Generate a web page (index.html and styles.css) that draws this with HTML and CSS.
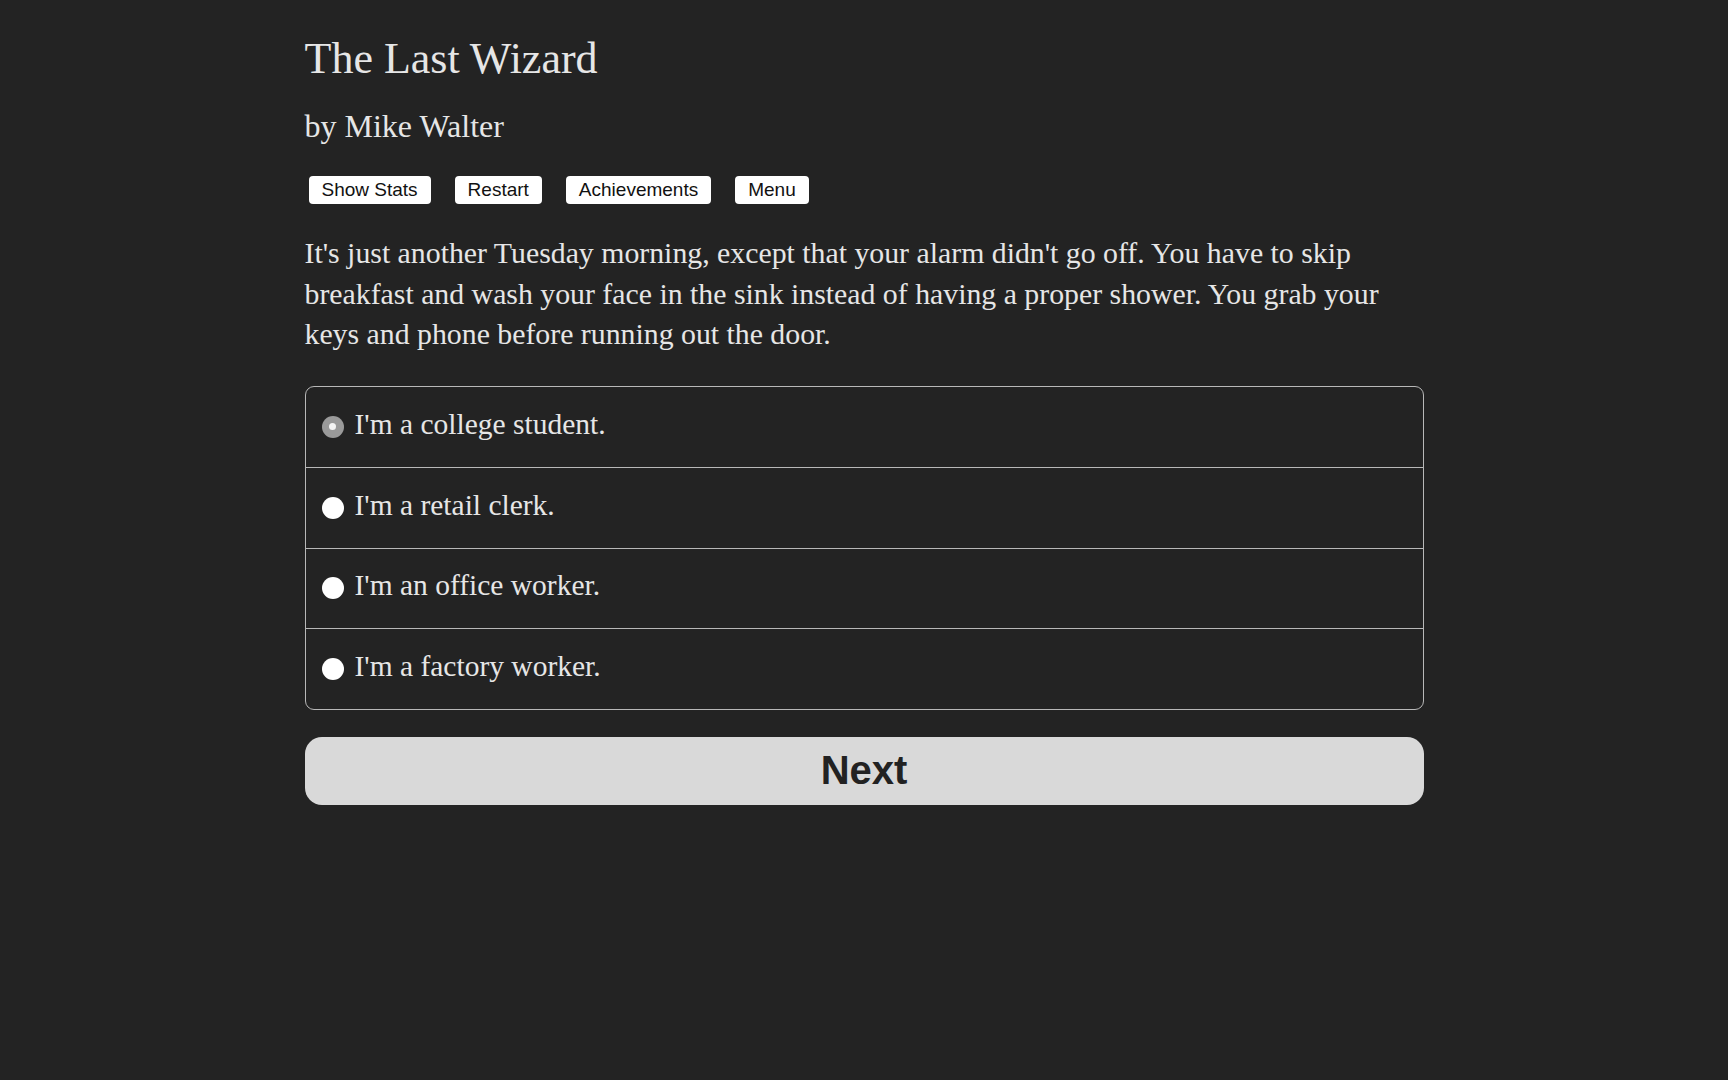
FILE: index.html
```html
<!DOCTYPE html>
<html lang="en">
<head>
<meta charset="utf-8">
<title>The Last Wizard</title>
<link rel="stylesheet" href="styles.css">
</head>
<body>
<main class="page">
  <h1 class="title">The Last Wizard</h1>
  <h2 class="byline">by Mike Walter</h2>
  <div class="toolbar">
    <button class="tool-btn">Show Stats</button>
    <button class="tool-btn">Restart</button>
    <button class="tool-btn">Achievements</button>
    <button class="tool-btn">Menu</button>
  </div>
  <p class="story">It's just another Tuesday morning, except that your alarm didn't go off. You have to skip breakfast and wash your face in the sink instead of having a proper shower. You grab your keys and phone before running out the door.</p>
  <form class="choices">
    <label class="choice"><input class="radio" type="radio" name="job" checked><span class="choice-text">I'm a college student.</span></label>
    <label class="choice"><input class="radio" type="radio" name="job"><span class="choice-text">I'm a retail clerk.</span></label>
    <label class="choice"><input class="radio" type="radio" name="job"><span class="choice-text">I'm an office worker.</span></label>
    <label class="choice"><input class="radio" type="radio" name="job"><span class="choice-text">I'm a factory worker.</span></label>
  </form>
  <button class="next-btn">Next</button>
</main>
</body>
</html>
```
FILE: styles.css
```css
html, body {
  margin: 0;
  padding: 0;
  background: #232323;
}
body {
  color: #e6e6e6;
  font-family: "Liberation Serif", "DejaVu Serif", serif;
}
.page {
  width: 1119px;
  margin: 0 auto;
  padding-top: 33px;
  display: flex;
  flex-direction: column;
}
.title {
  margin: 0;
  font-size: 44px;
  line-height: 52px;
  font-weight: normal;
}
.byline {
  margin: 21px 0 0;
  font-size: 32px;
  line-height: 40px;
  font-weight: normal;
}
.toolbar {
  margin-top: 30px;
  padding-left: 4px;
  display: flex;
  gap: 24px;
}
.tool-btn {
  height: 28px;
  padding: 0 13px;
  border: none;
  border-radius: 4px;
  background: #ffffff;
  color: #111;
  font-family: "Liberation Sans", Arial, sans-serif;
  font-size: 19px;
  line-height: 28px;
}
.story {
  margin: 29px 0 0;
  font-size: 29.8px;
  line-height: 40.5px;
}
.choices {
  margin-top: 31px;
  border: 1px solid #b8b8b8;
  border-radius: 9px;
  display: flex;
  flex-direction: column;
}
.choice {
  height: 80.5px;
  display: flex;
  align-items: center;
  padding: 0 0 6px 16px;
  font-size: 29.5px;
  line-height: 40px;
  box-sizing: border-box;
}
.choice + .choice {
  border-top: 1px solid #b8b8b8;
}
.radio {
  appearance: none;
  -webkit-appearance: none;
  margin: 6px 11px 0 0;
  width: 22px;
  height: 22px;
  border-radius: 50%;
  background: #ffffff;
  flex: none;
  position: relative;
}
.radio:checked {
  background: #9a9a9a;
}
.radio:checked::after {
  content: "";
  position: absolute;
  left: 7.5px;
  top: 7.5px;
  width: 7px;
  height: 7px;
  border-radius: 50%;
  background: #f4f4f4;
}
.next-btn {
  margin-top: 27px;
  height: 68px;
  border: none;
  border-radius: 17px;
  background: #d9d9d9;
  color: #222;
  font-family: "Liberation Sans", Arial, sans-serif;
  font-weight: bold;
  font-size: 40px;
}
```
